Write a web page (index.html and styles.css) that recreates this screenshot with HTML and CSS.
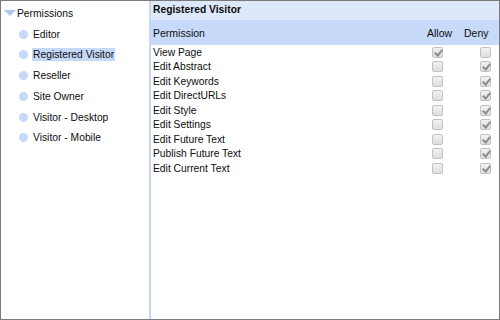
FILE: index.html
```html
<!DOCTYPE html>
<html lang="en">
  <head>
    <meta charset="UTF-8" />
    <title>Permissions</title>
    <link rel="stylesheet" href="styles.css">
  </head>
  <body>
    <div class="frame">
      <aside class="tree">
        <div class="root"><span class="caret"></span>Permissions</div>
        <ul class="roles">
          <li><span class="dot"></span><span class="label">Editor</span></li>
          <li class="selected"><span class="dot"></span><span class="label">Registered Visitor</span></li>
          <li><span class="dot"></span><span class="label">Reseller</span></li>
          <li><span class="dot"></span><span class="label">Site Owner</span></li>
          <li><span class="dot"></span><span class="label">Visitor - Desktop</span></li>
          <li><span class="dot"></span><span class="label">Visitor - Mobile</span></li>
        </ul>
      </aside>

      <section class="detail">
        <div class="title">Registered Visitor</div>
        <div class="row head">
          <span class="name">Permission</span>
          <span class="col">Allow</span>
          <span class="col">Deny</span>
        </div>
        <div class="row">
          <span class="name">View Page</span>
          <span class="col allow"><span class="box on"></span></span>
          <span class="col deny"><span class="box"></span></span>
        </div>
        <div class="row">
          <span class="name">Edit Abstract</span>
          <span class="col allow"><span class="box"></span></span>
          <span class="col deny"><span class="box on"></span></span>
        </div>
        <div class="row">
          <span class="name">Edit Keywords</span>
          <span class="col allow"><span class="box"></span></span>
          <span class="col deny"><span class="box on"></span></span>
        </div>
        <div class="row">
          <span class="name">Edit DirectURLs</span>
          <span class="col allow"><span class="box"></span></span>
          <span class="col deny"><span class="box on"></span></span>
        </div>
        <div class="row">
          <span class="name">Edit Style</span>
          <span class="col allow"><span class="box"></span></span>
          <span class="col deny"><span class="box on"></span></span>
        </div>
        <div class="row">
          <span class="name">Edit Settings</span>
          <span class="col allow"><span class="box"></span></span>
          <span class="col deny"><span class="box on"></span></span>
        </div>
        <div class="row">
          <span class="name">Edit Future Text</span>
          <span class="col allow"><span class="box"></span></span>
          <span class="col deny"><span class="box on"></span></span>
        </div>
        <div class="row">
          <span class="name">Publish Future Text</span>
          <span class="col allow"><span class="box"></span></span>
          <span class="col deny"><span class="box on"></span></span>
        </div>
        <div class="row">
          <span class="name">Edit Current Text</span>
          <span class="col allow"><span class="box"></span></span>
          <span class="col deny"><span class="box on"></span></span>
        </div>
      </section>
    </div>
  </body>
</html>
```

FILE: styles.css
```css
body,
html {
  margin: 0;
  padding: 0;
  background: #fff;
  font-family: "Liberation Sans", Arial, sans-serif;
  font-size: 10.3px;
  color: #0d0d0d;
}

.frame {
  box-sizing: border-box;
  width: 500px;
  height: 320px;
  border: 1px solid #7a7a7a;
  display: flex;
}

/* arbol de roles */
.tree {
  width: 148px;
  flex: none;
}

.root {
  display: flex;
  align-items: center;
  height: 14px;
  margin-top: 5px;
  padding-left: 3px;
}

.caret {
  width: 0;
  height: 0;
  border-left: 6px solid transparent;
  border-right: 6px solid transparent;
  border-top: 6px solid #a9c5f0;
  margin-right: 1px;
}

.roles {
  list-style: none;
  margin: 0;
  padding: 0 0 0 18px;
}

.roles li {
  display: flex;
  align-items: center;
  height: 14px;
  margin-top: 6.8px;
}

.roles li:first-child {
  margin-top: 7px;
}

.dot {
  width: 9px;
  height: 9px;
  border-radius: 50%;
  background: #c6d9f8;
  margin-right: 4px;
}

.label {
  padding: 1px 1px;
}

.selected .label {
  background: #c6d9f8;
}

/* panel de permisos */
.detail {
  flex: 1;
  border-left: 2px solid #c3d7f7;
}

.title {
  height: 19px;
  line-height: 18px;
  padding-left: 2px;
  font-weight: bold;
  background: #dde8fb;
}

.row {
  display: grid;
  grid-template-columns: 1fr 37px 35px;
  align-items: center;
  height: 14.5px;
  padding-left: 2px;
}

.row.head {
  height: 25px;
  background: #c7daf9;
  font-size: 10.5px;
}

.allow .box {
  margin-left: 5px;
}

.deny .box {
  margin-left: 16px;
}

.box {
  position: relative;
  display: block;
  box-sizing: border-box;
  width: 11px;
  height: 11px;
  border: 1px solid #c2c2c2;
  border-radius: 2px;
  background: linear-gradient(#f2f2f2, #dedede);
}

.box.on::after {
  content: "";
  position: absolute;
  left: 3px;
  top: 0px;
  width: 3px;
  height: 6px;
  border-right: 2px solid #8c8c8c;
  border-bottom: 2px solid #8c8c8c;
  transform: rotate(40deg);
}
```
